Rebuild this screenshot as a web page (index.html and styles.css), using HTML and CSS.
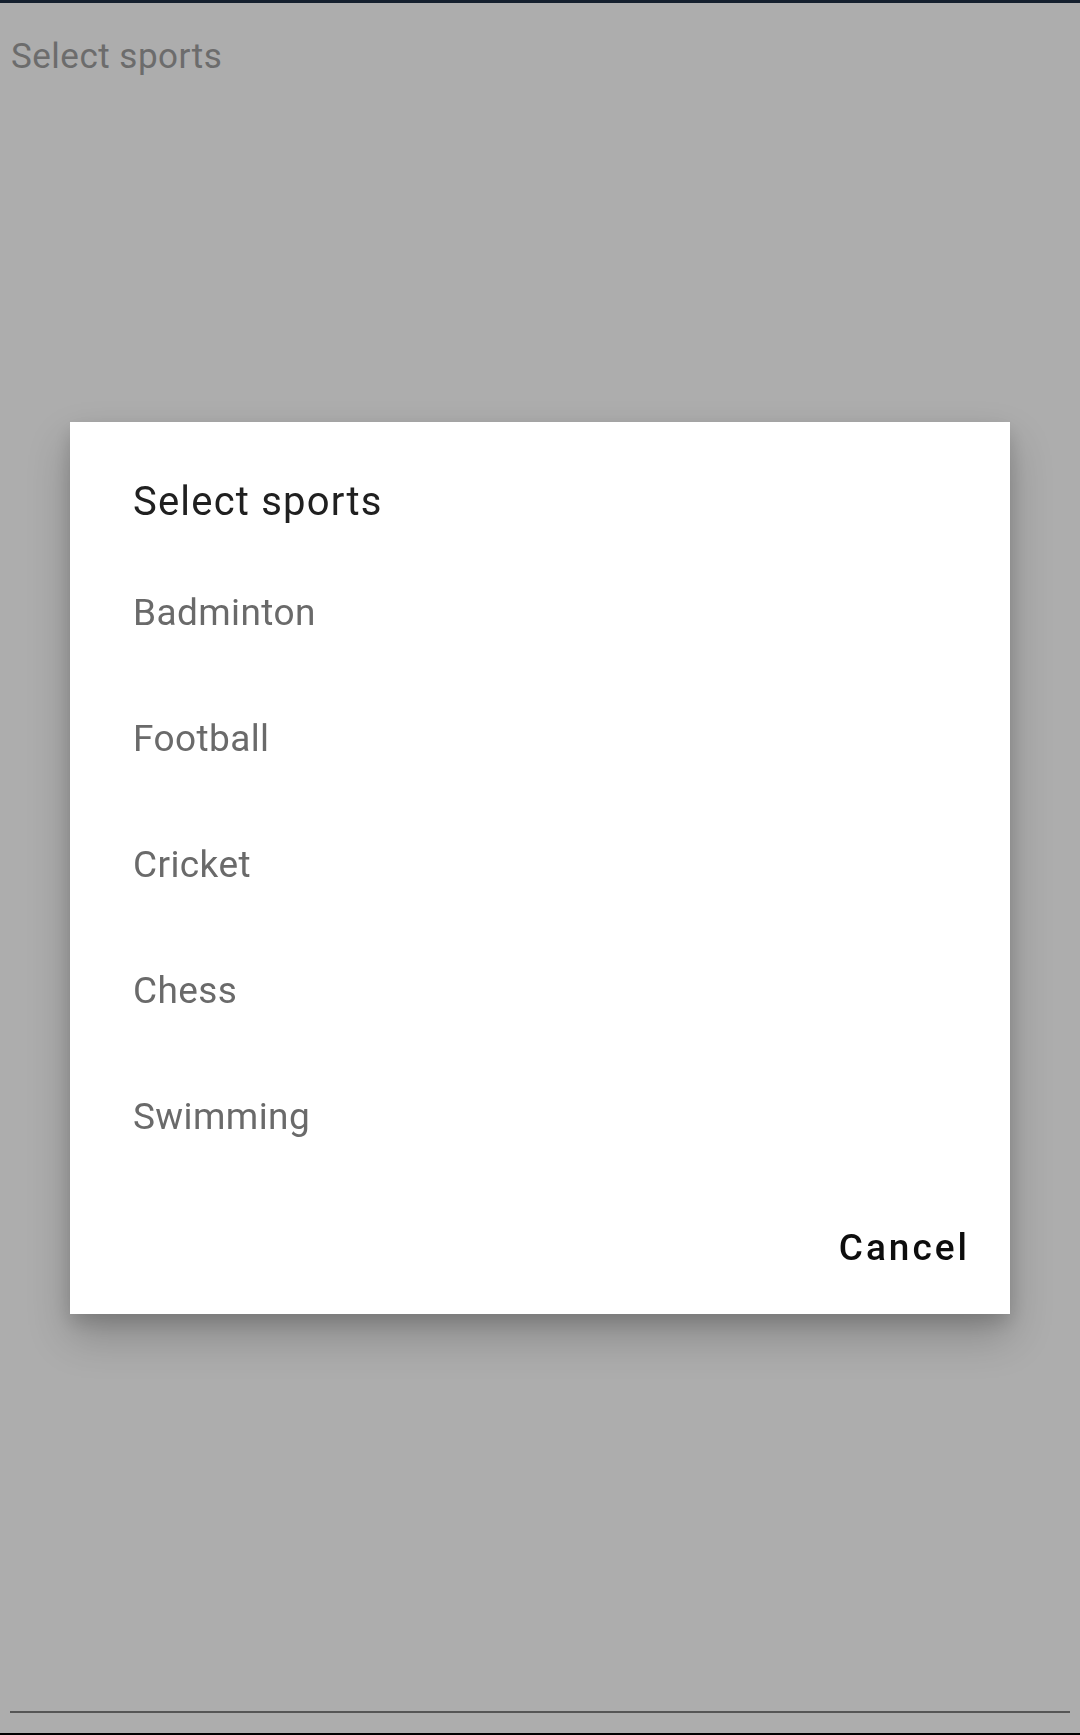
FILE: index.html
```html
<!DOCTYPE html>
<html lang="en">
<head>
<meta charset="utf-8">
<title>Select sports</title>
<link rel="stylesheet" href="styles.css">
</head>
<body>
<div class="page">
  <div class="topbar"></div>
  <div class="field">
    <div class="hint">Select sports</div>
  </div>
  <div class="navbar"></div>
</div>
<div class="overlay">
  <div class="dialog">
    <div class="dialog-title">Select sports</div>
    <ul class="options">
      <li class="option">Badminton</li>
      <li class="option">Football</li>
      <li class="option">Cricket</li>
      <li class="option">Chess</li>
      <li class="option">Swimming</li>
    </ul>
    <div class="actions">
      <button class="btn">Cancel</button>
    </div>
  </div>
</div>
</body>
</html>
```

FILE: styles.css
```css
html, body {
  margin: 0;
  padding: 0;
}
body {
  width: 1080px;
  height: 1735px;
  background: #adadad;
  font-family: Roboto, "Liberation Sans", sans-serif;
  overflow: hidden;
}
.page {
  display: flex;
  flex-direction: column;
  height: 1735px;
}
.topbar {
  height: 3px;
  background: #15202e;
}
.field {
  flex: 1;
  margin: 0 10px 20px 10px;
  border-bottom: 2px solid #565656;
  padding-top: 34px;
  padding-left: 1px;
}
.hint {
  font-size: 35px;
  line-height: 40px;
  letter-spacing: 0.5px;
  color: #6c6c6c;
}
.navbar {
  height: 2px;
  background: #000;
}
.overlay {
  position: fixed;
  inset: 0;
  display: flex;
  align-items: center;
  justify-content: center;
}
.dialog {
  width: 940px;
  background: #fff;
  box-shadow: 0 22px 40px rgba(0, 0, 0, 0.22), 0 8px 18px rgba(0, 0, 0, 0.14);
  padding: 56px 40px 42px 63px;
  box-sizing: border-box;
  display: flex;
  flex-direction: column;
}
.dialog-title {
  font-size: 40px;
  line-height: 48px;
  letter-spacing: 1.2px;
  color: #202020;
}
.options {
  list-style: none;
  margin: 24px 0 0 0;
  padding: 0;
}
.option {
  font-size: 37px;
  line-height: 126px;
  height: 126px;
  letter-spacing: 0.4px;
  color: #6a6a6a;
}
.actions {
  display: flex;
  justify-content: flex-end;
  margin-top: 44px;
}
.btn {
  border: none;
  background: none;
  padding: 0;
  font-family: Roboto, "Liberation Sans", sans-serif;
  font-weight: 500;
  font-size: 37px;
  line-height: 48px;
  letter-spacing: 3px;
  color: #0d0d0d;
}
```
